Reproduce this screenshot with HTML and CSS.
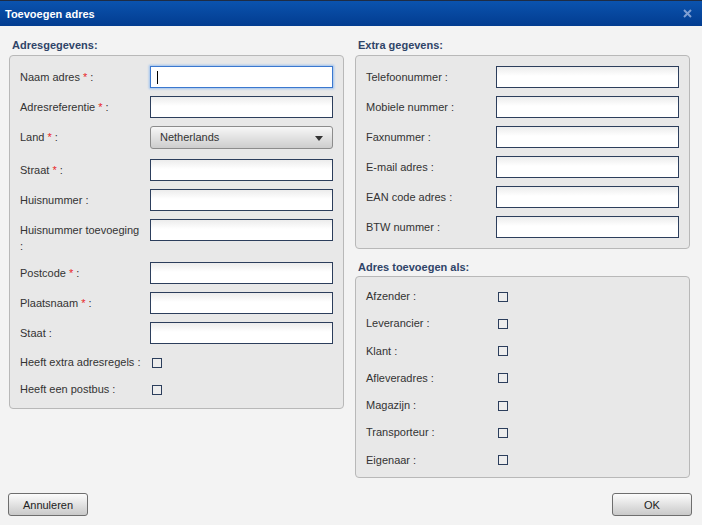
FILE: index.html
```html
<!DOCTYPE html>
<html lang="nl">
<head>
  <meta charset="UTF-8">
  <title>Toevoegen adres</title>
  <link rel="stylesheet" href="styles.css">
</head>
<body>
  <div class="dialog">
    <div class="titlebar">
      <span class="title">Toevoegen adres</span>
      <svg class="close" width="9" height="9" viewBox="0 0 9 9">
        <path d="M1 1 L8 8 M8 1 L1 8" stroke="#7f9fd3" stroke-width="2" fill="none"/>
      </svg>
    </div>

    <div class="content">
      <div class="column">
        <h3 class="section-title">Adresgegevens:</h3>
        <div class="box">
          <div class="row">
            <label>Naam adres <span class="req">*</span> :</label>
            <div class="focus-wrap"><input type="text" class="focused"></div>
          </div>
          <div class="row">
            <label>Adresreferentie <span class="req">*</span> :</label>
            <input type="text">
          </div>
          <div class="row select-row">
            <label>Land <span class="req">*</span> :</label>
            <div class="select">Netherlands</div>
          </div>
          <div class="row">
            <label>Straat <span class="req">*</span> :</label>
            <input type="text">
          </div>
          <div class="row">
            <label>Huisnummer :</label>
            <input type="text">
          </div>
          <div class="row">
            <label>Huisnummer toevoeging :</label>
            <input type="text">
          </div>
          <div class="row">
            <label>Postcode <span class="req">*</span> :</label>
            <input type="text">
          </div>
          <div class="row">
            <label>Plaatsnaam <span class="req">*</span> :</label>
            <input type="text">
          </div>
          <div class="row">
            <label>Staat :</label>
            <input type="text">
          </div>
          <div class="check-row first">
            <label>Heeft extra adresregels :</label>
            <span class="checkbox"></span>
          </div>
          <div class="check-row">
            <label>Heeft een postbus :</label>
            <span class="checkbox"></span>
          </div>
        </div>
      </div>

      <div class="column">
        <h3 class="section-title">Extra gegevens:</h3>
        <div class="box">
          <div class="row"><label>Telefoonummer :</label><input type="text"></div>
          <div class="row"><label>Mobiele nummer :</label><input type="text"></div>
          <div class="row"><label>Faxnummer :</label><input type="text"></div>
          <div class="row"><label>E-mail adres :</label><input type="text"></div>
          <div class="row"><label>EAN code adres :</label><input type="text"></div>
          <div class="row"><label>BTW nummer :</label><input type="text"></div>
        </div>

        <h3 class="section-title second">Adres toevoegen als:</h3>
        <div class="box checks">
          <div class="check-row"><label>Afzender :</label><span class="checkbox"></span></div>
          <div class="check-row"><label>Leverancier :</label><span class="checkbox"></span></div>
          <div class="check-row"><label>Klant :</label><span class="checkbox"></span></div>
          <div class="check-row"><label>Afleveradres :</label><span class="checkbox"></span></div>
          <div class="check-row"><label>Magazijn :</label><span class="checkbox"></span></div>
          <div class="check-row"><label>Transporteur :</label><span class="checkbox"></span></div>
          <div class="check-row"><label>Eigenaar :</label><span class="checkbox"></span></div>
        </div>
      </div>
    </div>

    <div class="footer">
      <button class="btn">Annuleren</button>
      <button class="btn">OK</button>
    </div>
  </div>
</body>
</html>
```

FILE: styles.css
```css
body {
  margin: 0;
  font-family: "Liberation Sans", Arial, sans-serif;
  font-size: 11px;
  color: #333;
  background: #f3f3f3;
}
.dialog {
  width: 702px;
  height: 525px;
  display: flex;
  flex-direction: column;
}
.titlebar {
  height: 25px;
  border-top: 1px solid #1e2c44;
  background: linear-gradient(#0b53ae, #023c90);
  display: flex;
  align-items: center;
  justify-content: space-between;
  padding: 0 10px 0 5px;
}
.title {
  color: #fff;
  font-weight: bold;
  font-size: 11px;
}
.close {
  display: block;
}
.content {
  display: flex;
  gap: 11px;
  padding: 12px 12px 0 9px;
  align-items: flex-start;
}
.column {
  width: 335px;
}
.section-title {
  margin: 0 0 3px 0;
  padding-left: 3px;
  font-size: 11px;
  line-height: 14px;
  font-weight: bold;
  color: #2f4468;
}
.section-title.second {
  margin-top: 11px;
  margin-bottom: 2px;
}
.box {
  background: #e8e8e8;
  border: 1px solid #b8b8b8;
  border-radius: 4px;
  padding: 10px;
}
.box.checks {
  padding: 11px 10px 8px 10px;
}
.row {
  display: flex;
  align-items: flex-start;
  margin-bottom: 8px;
}
.row:last-child {
  margin-bottom: 0;
}
.row label {
  width: 123px;
  padding-right: 7px;
  padding-top: 3px;
  line-height: 16px;
  flex-shrink: 0;
}
.req {
  color: #e8262b;
}
input[type="text"] {
  flex: 1;
  min-width: 0;
  height: 22px;
  box-sizing: border-box;
  margin: 0;
  border: 1px solid #2c3e5c;
  background: linear-gradient(#ececec, #fff 45%);
  font-family: inherit;
  font-size: 11px;
  outline: none;
}
.focus-wrap {
  flex: 1;
  display: flex;
  position: relative;
}
.focus-wrap::after {
  content: "";
  position: absolute;
  left: 7px;
  top: 5px;
  width: 1px;
  height: 13px;
  background: #000;
}
input.focused {
  border-color: #3b78cf;
  box-shadow: 0 0 2px 1px #9cc0ee;
  background: #fff;
}
.select-row {
  margin-bottom: 10px;
}
.select {
  flex: 1;
  height: 23px;
  box-sizing: border-box;
  border: 1px solid #8c8c8c;
  border-radius: 3px;
  background: linear-gradient(#f7f7f7, #cdcdcd);
  padding-left: 9px;
  line-height: 21px;
  position: relative;
}
.select::after {
  content: "";
  position: absolute;
  right: 9px;
  top: 9px;
  border-left: 4px solid transparent;
  border-right: 4px solid transparent;
  border-top: 5px solid #333;
}
.check-row {
  display: flex;
  align-items: center;
  line-height: 17px;
  margin-bottom: 10px;
}
.checks .check-row {
  margin-bottom: 10.3px;
}
.check-row.first {
  margin-top: 10px;
}
.check-row:last-child,
.checks .check-row:last-child {
  margin-bottom: 0;
}
.check-row label {
  width: 132px;
  flex-shrink: 0;
}
.checkbox {
  width: 10px;
  height: 10px;
  box-sizing: border-box;
  border: 1px solid #2c3e5c;
  background: #ededed;
}
.footer {
  margin-top: auto;
  display: flex;
  justify-content: space-between;
  padding: 0 10px 9px 8px;
}
.btn {
  width: 80px;
  height: 23px;
  border: 1px solid #6e6e6e;
  border-radius: 3px;
  background: linear-gradient(#fcfcfc, #c9c9c9);
  font-family: inherit;
  font-size: 11px;
  color: #222;
  padding: 0;
}
```
